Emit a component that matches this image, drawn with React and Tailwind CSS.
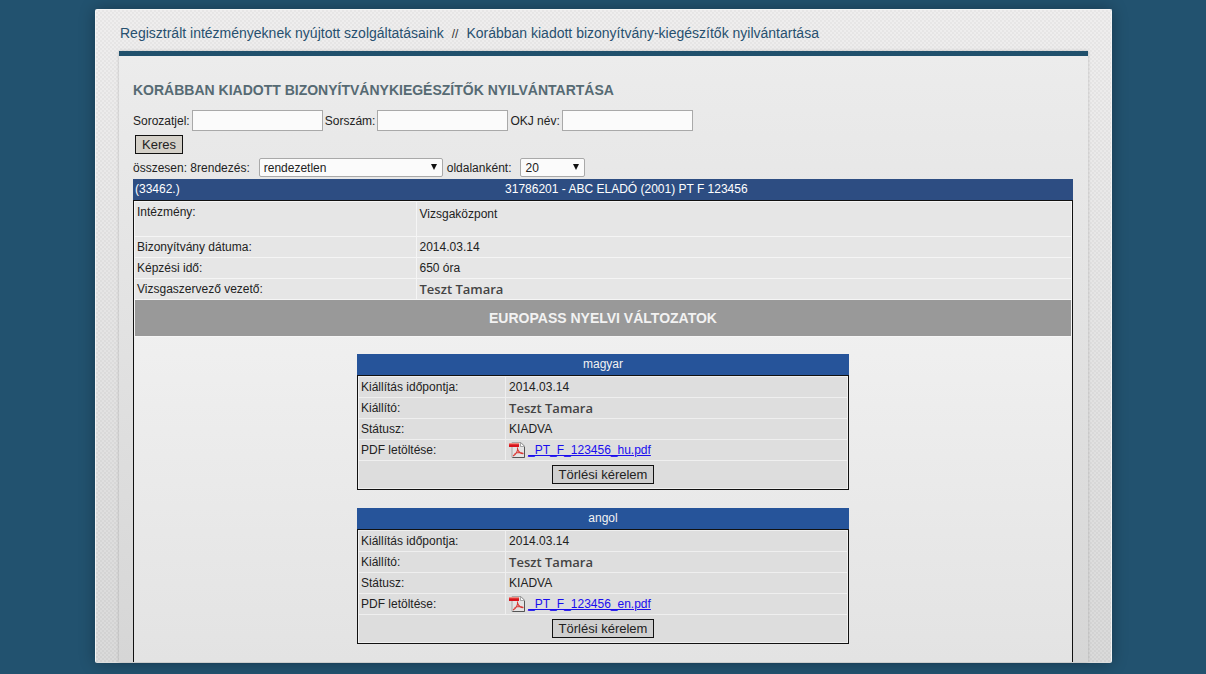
import React from "react";

const versions = [
  { language: "magyar", date: "2014.03.14", issuer: "Teszt Tamara", status: "KIADVA", file: "_PT_F_123456_hu.pdf" },
  { language: "angol", date: "2014.03.14", issuer: "Teszt Tamara", status: "KIADVA", file: "_PT_F_123456_en.pdf" },
];

const PdfIcon = () => (
  <svg className="w-4 h-4 shrink-0" viewBox="0 0 16 16" aria-hidden="true">
    <path d="M3 0.5h9l3.500 3.500v11.500H3z" fill="#e4e4e4" stroke="#a8a8a8" />
    <path d="M3.500 15.500h12V5" fill="none" stroke="#555" />
    <path d="M11.500 0.500v4h4z" fill="#fafafa" stroke="#888" strokeWidth="0.7" />
    <path d="M0 1h10v4H0z" fill="#d8141c" />
    <path d="M0 1h10v1.300H0z" fill="#f08a80" />
    <path
      d="M8.500 5.500c.5 3-1.500 6.500-4.500 8.500M8.500 7c.8 2.500 3 4.500 5.800 4.800M5.500 12c2.500-1.500 6-1.800 9-.6"
      fill="none"
      stroke="#d93a36"
      strokeWidth="1.100"
    />
  </svg>
);

const SearchField = ({ id, label }) => (
  <div className="flex items-center gap-[2px]">
    <label htmlFor={id}>{label}</label>
    <input id={id} type="text" className="w-[131px] h-[21px] px-1 border border-[#a9a9a9] bg-[#fbfbfb]" />
  </div>
);

const SelectBox = ({ id, className, children }) => (
  <div className={`relative ${className}`}>
    <select id={id} className="appearance-none block w-full h-[19px] pl-1 pr-4 border border-[#a9a9a9] rounded-xs bg-[#fbfbfb] text-xs">
      {children}
    </select>
    <svg className="absolute right-[6px] top-[6px] w-[6px] h-[6px] pointer-events-none" viewBox="0 0 6 6" aria-hidden="true">
      <path d="M0 0h6L3 6z" fill="#111" />
    </svg>
  </div>
);

const ActionButton = ({ children, className }) => (
  <button type="button" className={`h-[19px] px-[6px] border border-[#111] text-[13px] leading-4 ${className}`}>
    {children}
  </button>
);

const Row = ({ label, children, tall, shade }) => (
  <tr className={tall ? "h-[34px]" : "h-5"}>
    <th scope="row" className={`w-[30%] p-0 pl-[2px] text-left align-top font-normal leading-5 ${shade}`}>
      {label}
    </th>
    <td className={`p-0 pl-[3px] align-top leading-5 ${tall ? "pt-[2px]" : ""} ${shade}`}>{children}</td>
  </tr>
);

const PersonName = ({ children }) => (
  <span className="block h-5 leading-5 font-['Open_Sans',sans-serif] text-[13px] font-semibold text-[#444]">{children}</span>
);

const LanguageVersion = ({ version }) => (
  <section className="w-[492px] max-w-full mx-auto">
    <h3 className="h-[21px] leading-[21px] text-center text-[#f2f2f2] bg-[#26549a]">{version.language}</h3>
    <table className="w-full border border-[#111] border-separate border-spacing-px bg-[#efefef]">
      <tbody>
        <Row label="Kiállítás időpontja:" shade="bg-[#dedede]">{version.date}</Row>
        <Row label="Kiállító:" shade="bg-[#dedede]"><PersonName>{version.issuer}</PersonName></Row>
        <Row label="Státusz:" shade="bg-[#dedede]">{version.status}</Row>
        <Row label="PDF letöltése:" shade="bg-[#dedede]">
          <div className="flex items-center gap-[3px]">
            <PdfIcon />
            <a href="#pdf" className="underline text-[#1a0dee]">{version.file}</a>
          </div>
        </Row>
        <tr className="h-[27px]">
          <td colSpan={2} className="p-0 text-center align-middle bg-[#dddddd]">
            <ActionButton className="block mx-auto bg-[#cfcfcf]">Törlési kérelem</ActionButton>
          </td>
        </tr>
      </tbody>
    </table>
  </section>
);

export default function App() {
  return (
    <div className="min-h-screen pt-[9px] pb-[11px] pl-[95px] pr-[94px] bg-[#22526f] font-['Liberation_Sans',Arial,sans-serif] text-xs text-[#222]">
      <div className="rounded-xs border border-[#f4f4f4] border-b-[#dddddd] bg-linear-to-b from-[#efeeee] to-[#dadada] shadow-[0_0_16px_rgba(0,0,0,0.3)]">
        <div className="px-[23px] bg-[conic-gradient(rgba(0,0,0,0.035)_25%,transparent_25%_50%,rgba(0,0,0,0.035)_50%_75%,transparent_75%)] bg-size-[4px_4px]">
          <nav className="flex items-baseline h-[41px] pt-[11px] pl-px text-sm leading-6 text-[#27506f]">
            <a href="#services">Regisztrált intézményeknek nyújtott szolgáltatásaink</a>
            <span className="mx-2 text-xs text-[#333]">//</span>
            <a href="#registry">Korábban kiadott bizonyítvány-kiegészítők nyilvántartása</a>
          </nav>

          <main className="border-t-5 border-t-[#20506c] bg-linear-to-b from-[#ececec] to-[#d6d6d6] shadow-[0_0_3px_rgba(0,0,0,0.2)] px-[14px] pt-6">
            <h1 className="text-sm leading-5 font-bold uppercase text-[#566a73]">
              Korábban kiadott bizonyítványkiegészítők nyilvántartása
            </h1>

            <form className="pt-[10px]">
              <div className="flex flex-wrap items-center gap-[2px]">
                <SearchField id="series" label="Sorozatjel:" />
                <SearchField id="serial" label="Sorszám:" />
                <SearchField id="okj" label="OKJ név:" />
              </div>
              <ActionButton className="block mt-1 ml-[2px] bg-[#d4d0c8]">Keres</ActionButton>
              <div className="flex flex-wrap items-center mt-1 mb-[2px]">
                <label htmlFor="sort" className="mr-[9px]">összesen: 8rendezés:</label>
                <SelectBox id="sort" className="w-[184px]">
                  <option>rendezetlen</option>
                </SelectBox>
                <label htmlFor="per-page" className="ml-1 mr-[9px]">oldalanként:</label>
                <SelectBox id="per-page" className="w-[65px]">
                  <option>20</option>
                </SelectBox>
              </div>
            </form>

            <div className="flex h-[21px] pl-[2px] mr-px leading-[21px] text-white bg-[#2d4d82]">
              <span>(33462.)</span>
              <h2 className="grow text-center">31786201 - ABC ELADÓ (2001) PT F 123456</h2>
            </div>

            <div className="mr-px border border-b-0 border-[#111] bg-linear-to-b from-[#f5f5f5] to-[#e3e3e3]">
              <table className="w-full border-separate border-spacing-px bg-[#f5f5f5]">
                <tbody>
                  <Row label="Intézmény:" shade="bg-[#e6e6e6]" tall>Vizsgaközpont</Row>
                  <Row label="Bizonyítvány dátuma:" shade="bg-[#e6e6e6]">2014.03.14</Row>
                  <Row label="Képzési idő:" shade="bg-[#e6e6e6]">650 óra</Row>
                  <Row label="Vizsgaszervező vezető:" shade="bg-[#e6e6e6]"><PersonName>Teszt Tamara</PersonName></Row>
                  <tr className="h-9">
                    <th colSpan={2} className="p-0 text-center align-middle text-sm font-bold text-[#f2f2f2] bg-[#999999]">
                      EUROPASS NYELVI VÁLTOZATOK
                    </th>
                  </tr>
                </tbody>
              </table>
              <div className="flex flex-col gap-[18px] pt-[17px] pb-[18px]">
                {versions.map((version) => (
                  <LanguageVersion key={version.language} version={version} />
                ))}
              </div>
            </div>
          </main>
        </div>
      </div>
    </div>
  );
}
